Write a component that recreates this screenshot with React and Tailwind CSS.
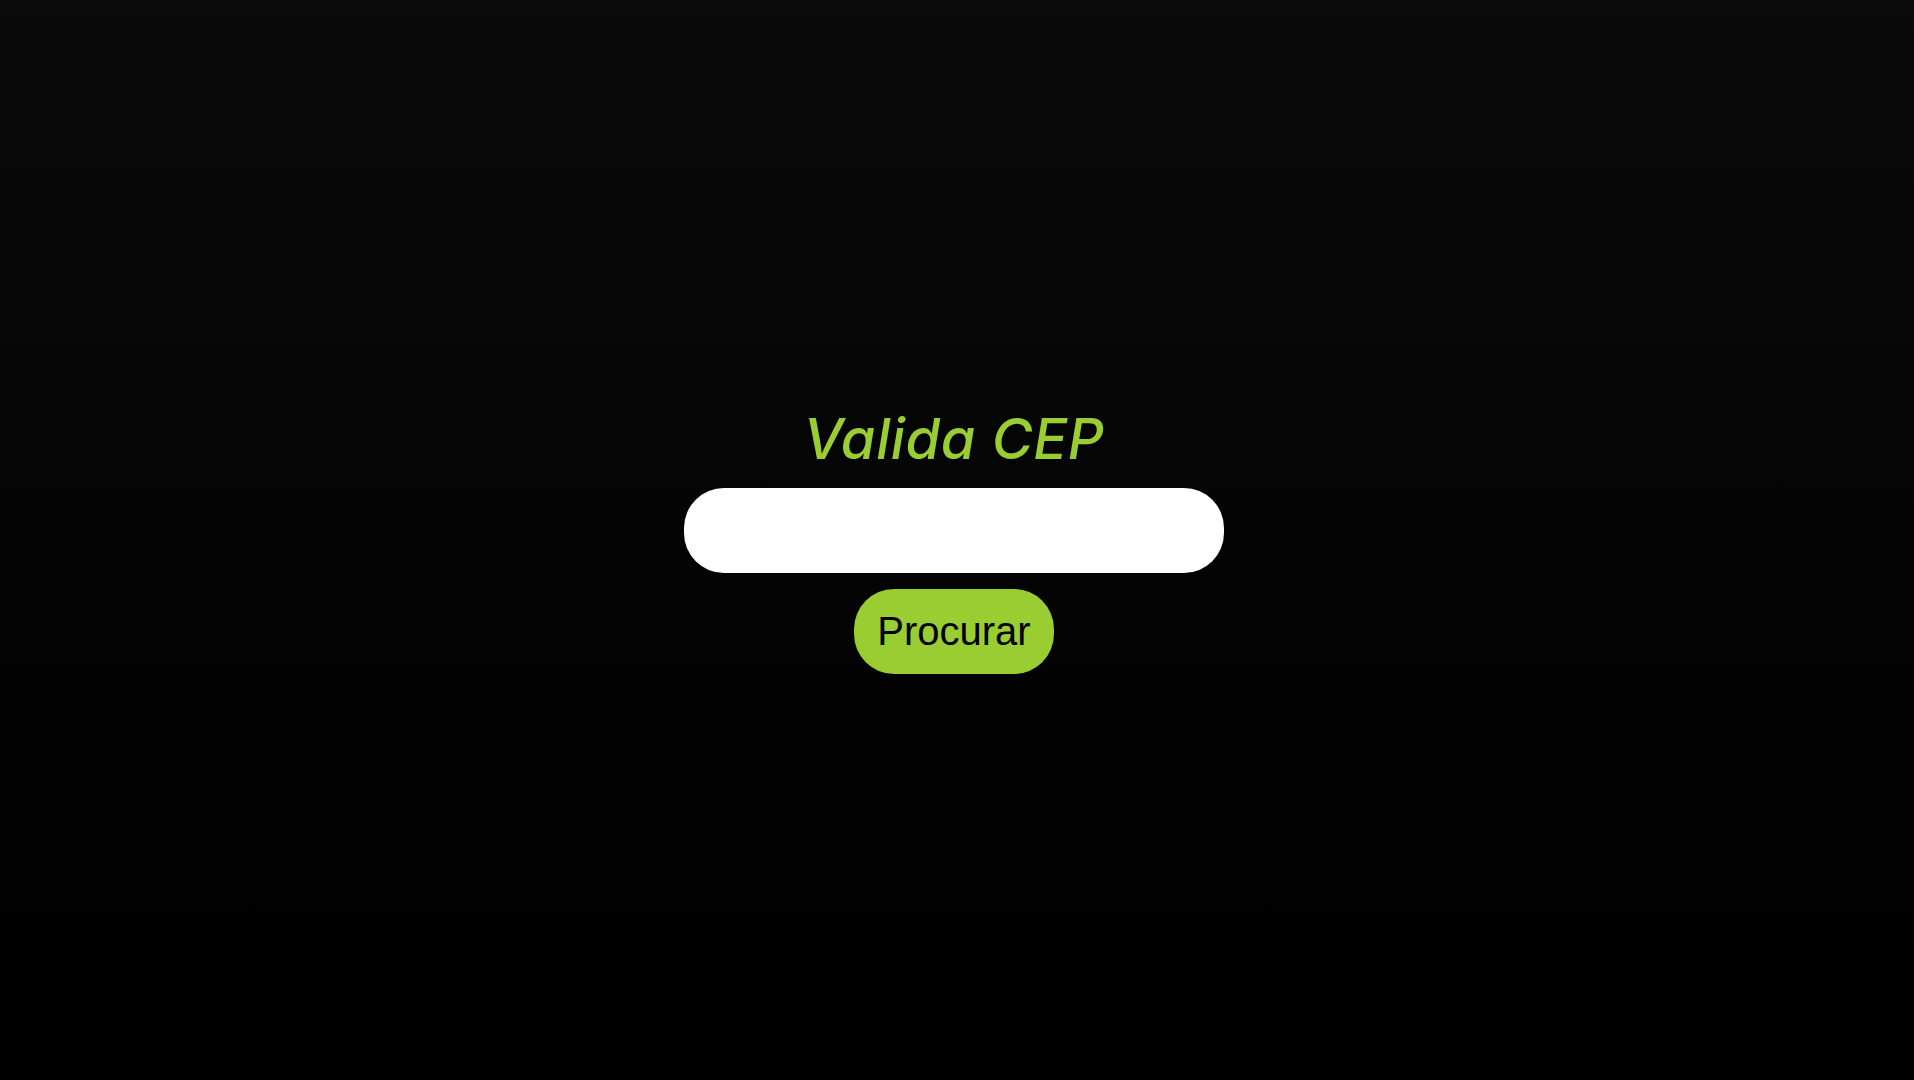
import React, { useState } from "react";

export default function App() {
  const [cep, setCep] = useState("");

  return (
    <div className="h-screen w-full flex flex-col items-center justify-center gap-4 pr-[6px] pb-[2px] bg-linear-to-b from-[#0b0b0b] to-[#010101]">
      <h1 className="text-[56px] leading-[68px] italic font-medium tracking-[0.6px] text-[#9acd32] font-['Inter',sans-serif] -mb-px">
        Valida CEP
      </h1>

      <input
        className="w-[540px] h-[85px] px-6 rounded-[40px] bg-white text-black text-[40px] font-['Liberation_Sans',Arial,sans-serif] outline-none border-0"
        value={cep}
        onChange={(e) => setCep(e.target.value)}
      />

      <button className="h-[85px] px-[23px] rounded-[40px] bg-[#9acd32] text-black text-[40px] font-['Liberation_Sans',Arial,sans-serif]">
        Procurar
      </button>
    </div>
  );
}
